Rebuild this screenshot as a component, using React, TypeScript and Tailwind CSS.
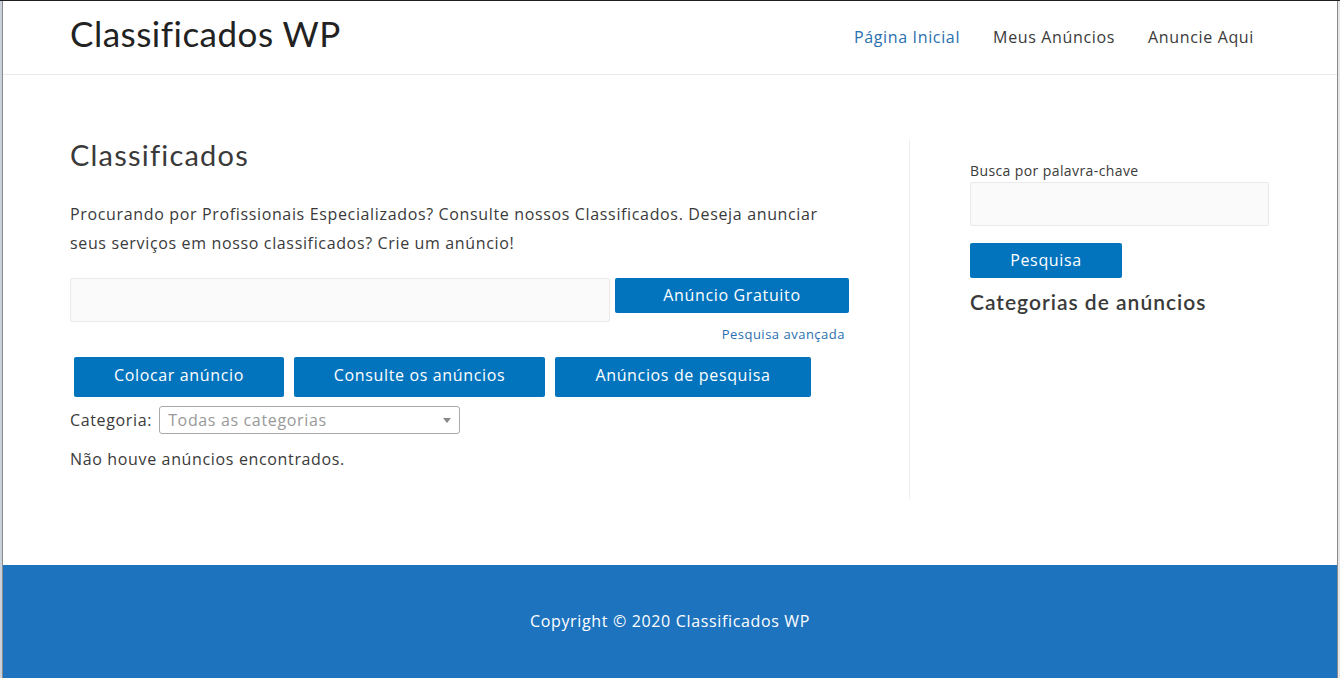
import React from 'react';

const body = "font-['Open_Sans',sans-serif] tracking-[0.65px]";
const heading = "font-['Lato',sans-serif]";

const BlueButton: React.FC<{ label: string; className?: string }> = ({ label, className = '' }) => (
  <button
    type="button"
    className={`bg-[#0274be] text-white text-[16px] rounded-[2px] flex items-center justify-center tracking-[0.65px] ${className}`}
  >
    {label}
  </button>
);

const App: React.FC = () => {
  return (
    <div className={`w-[1340px] h-[678px] overflow-hidden bg-white border-t border-[#1f1f1f] flex ${body}`}>
      {/* window edge on the left */}
      <div className="w-[2px] bg-[#c9d2dc] flex-shrink-0" />
      <div className="w-px bg-[#8a8a8a] flex-shrink-0" />

      <div className="flex-1 flex flex-col min-w-0">
        {/* Header */}
        <header className="h-[74px] border-b border-[#eaeaea] flex-shrink-0">
          <div className="w-[1200px] mx-auto h-full flex items-center justify-between">
            <div className={`${heading} text-[35px] text-[#222] tracking-[0.5px] -mt-[8px]`}>Classificados WP</div>
            <nav className="flex items-center gap-[33px] text-[16px] text-[#3a3a3a] pr-[16px] -mt-[1px]">
              <a className="text-[#2b6fae]">Página Inicial</a>
              <a>Meus Anúncios</a>
              <a>Anuncie Aqui</a>
            </nav>
          </div>
        </header>

        {/* Main */}
        <main className="flex-1 min-h-0">
          <div className="w-[1200px] mx-auto flex pt-[64px]">
            {/* Primary */}
            <div className="w-[840px] pr-[60px] border-r border-[#eeeeee] h-[360px]">
              <h1 className={`${heading} text-[29px] text-[#3a3a3a] leading-[1.2] -mt-[1px] tracking-[1.2px]`}>
                Classificados
              </h1>
              <p className="mt-[27px] text-[16px] leading-[29px] text-[#3a3a3a]">
                Procurando por Profissionais Especializados? Consulte nossos Classificados. Deseja anunciar seus
                serviços em nosso classificados? Crie um anúncio!
              </p>

              <div className="mt-[20px] flex gap-[5px]">
                <div className="w-[540px] h-[44px] bg-[#fafafa] border border-[#eaeaea] rounded-[2px]" />
                <BlueButton label="Anúncio Gratuito" className="w-[234px] h-[35px]" />
              </div>
              <div className="flex justify-end pr-[4px] mt-[3px]">
                <a className="text-[13px] text-[#2b6fae] tracking-[0.5px]">Pesquisa avançada</a>
              </div>

              <div className="mt-[13px] flex gap-[10px] pl-[4px]">
                <BlueButton label="Colocar anúncio" className="w-[210px] h-[40px] pb-[4px]" />
                <BlueButton label="Consulte os anúncios" className="w-[251px] h-[40px] pb-[4px]" />
                <BlueButton label="Anúncios de pesquisa" className="w-[256px] h-[40px] pb-[4px]" />
              </div>

              <div className="mt-[9px] flex items-center gap-[7px] text-[16px] text-[#3a3a3a]">
                <span>Categoria:</span>
                <div className="w-[301px] h-[28px] border border-[#aaaaaa] rounded-[3px] flex items-center justify-between px-[8px]">
                  <span className="text-[#999999]">Todas as categorias</span>
                  <svg width="8" height="5" viewBox="0 0 8 5">
                    <path d="M0 0 L8 0 L4 5 Z" fill="#888" />
                  </svg>
                </div>
              </div>

              <p className="mt-[13px] text-[16px] text-[#3a3a3a]">Não houve anúncios encontrados.</p>
            </div>

            {/* Sidebar */}
            <aside className="w-[360px] pl-[60px] pt-[22px]">
              <label className="block text-[14px] text-[#3a3a3a] leading-[20px] tracking-[0.4px]">
                Busca por palavra-chave
              </label>
              <div className="mt-[1px] w-[299px] h-[44px] bg-[#fafafa] border border-[#eaeaea] rounded-[2px]" />
              <BlueButton label="Pesquisa" className="mt-[17px] w-[152px] h-[35px] pb-[2px]" />
              <h2 className={`${heading} mt-[8px] text-[21px] font-semibold text-[#3a3a3a] tracking-[1px]`}>
                Categorias de anúncios
              </h2>
            </aside>
          </div>
        </main>

        {/* Footer */}
        <footer className="h-[113px] bg-[#1e73be] flex-shrink-0 flex items-center justify-center">
          <p className="text-white text-[16px] -mt-[2px]">Copyright © 2020 Classificados WP</p>
        </footer>
      </div>

      {/* window edge on the right */}
      <div className="w-px bg-[#8a8a8a] flex-shrink-0" />
      <div className="w-[2px] bg-[#e6e6e6] flex-shrink-0" />
    </div>
  );
};

export default App;
